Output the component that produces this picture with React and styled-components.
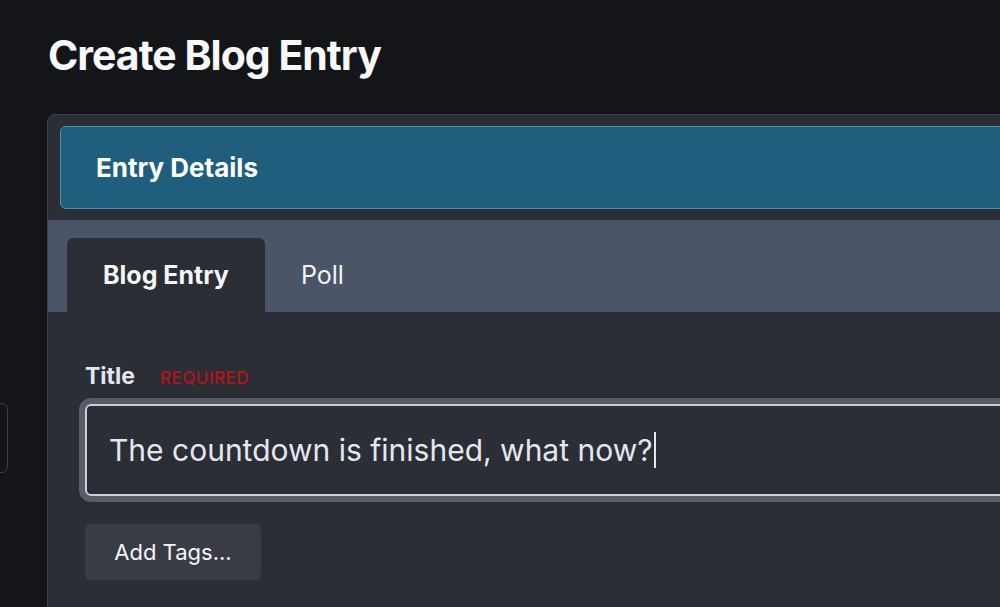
import React from "react";
import styled, { createGlobalStyle } from "styled-components";

const GlobalStyle = createGlobalStyle`
  html, body {
    margin: 0;
    padding: 0;
    background: #141518;
    overflow: hidden;
    font-family: Inter, "Noto Sans", sans-serif;
  }
`;

const Page = styled.div`
  position: relative;
  width: 1000px;
  height: 607px;
  padding: 26px 0 0 48px;
  box-sizing: border-box;
  overflow: hidden;
`;

const EdgeBox = styled.div`
  position: absolute;
  left: -40px;
  top: 403px;
  width: 46px;
  height: 68px;
  border: 1px solid #3a3c41;
  border-radius: 6px;
`;

const Heading = styled.h1`
  margin: 0;
  font-size: 41px;
  line-height: 58px;
  font-weight: 700;
  letter-spacing: -1px;
  color: #f7f8fa;
`;

const Card = styled.div`
  margin: 30px 0 0 -1px;
  width: 1100px;
  background: #2b2e35;
  border: 1px solid #3b3e45;
  border-radius: 8px;
`;

const BannerWrap = styled.div`
  padding: 11px 12px 11px 12px;
`;

const Banner = styled.div`
  display: flex;
  align-items: center;
  height: 81px;
  padding-left: 35px;
  background: #1f5f7d;
  border: 1px solid #5190ac;
  border-radius: 6px;
  color: #ffffff;
  font-size: 26px;
  font-weight: 700;
`;

const TabBar = styled.div`
  display: flex;
  align-items: flex-end;
  height: 92px;
  padding-left: 19px;
  background: #4a5568;
`;

const Tab = styled.div`
  display: flex;
  align-items: center;
  height: 74px;
  padding: 0 36px;
  border-radius: 6px 6px 0 0;
  background: ${(p) => (p.active ? "#2b2e35" : "transparent")};
  color: #f4f5f7;
  font-size: 25px;
  font-weight: ${(p) => (p.active ? 700 : 400)};
`;

const Body = styled.div`
  padding: 50px 38px 40px 37px;
`;

const LabelRow = styled.div`
  display: flex;
  align-items: baseline;
  gap: 25px;
  height: 28px;
`;

const Label = styled.span`
  font-size: 23px;
  font-weight: 700;
  color: #e2e8f0;
`;

const Required = styled.span`
  font-size: 17px;
  font-weight: 500;
  letter-spacing: 0.5px;
  color: #b4141a;
`;

const Field = styled.div`
  display: flex;
  align-items: center;
  margin-top: 14px;
  height: 88px;
  padding-left: 22px;
  border: 2px solid #c9cde0;
  border-radius: 6px;
  box-shadow: 0 0 0 6px #585c67;
  font-size: 30px;
  color: #e2e8f0;
`;

const Caret = styled.span`
  display: inline-block;
  width: 2px;
  height: 36px;
  margin-left: 1px;
  background: #e2e8f0;
`;

const Button = styled.div`
  display: inline-flex;
  align-items: center;
  justify-content: center;
  margin-top: 28px;
  width: 176px;
  height: 56px;
  border-radius: 6px;
  background: #393c45;
  color: #f4f5f7;
  font-size: 22px;
`;

export default function App() {
  return (
    <>
      <GlobalStyle />
      <Page>
        <EdgeBox />
        <Heading>Create Blog Entry</Heading>
        <Card>
          <BannerWrap>
            <Banner>Entry Details</Banner>
          </BannerWrap>
          <TabBar>
            <Tab active>Blog Entry</Tab>
            <Tab>Poll</Tab>
          </TabBar>
          <Body>
            <LabelRow>
              <Label>Title</Label>
              <Required>REQUIRED</Required>
            </LabelRow>
            <Field>
              The countdown is finished, what now?
              <Caret />
            </Field>
            <Button>Add Tags...</Button>
          </Body>
        </Card>
      </Page>
    </>
  );
}
